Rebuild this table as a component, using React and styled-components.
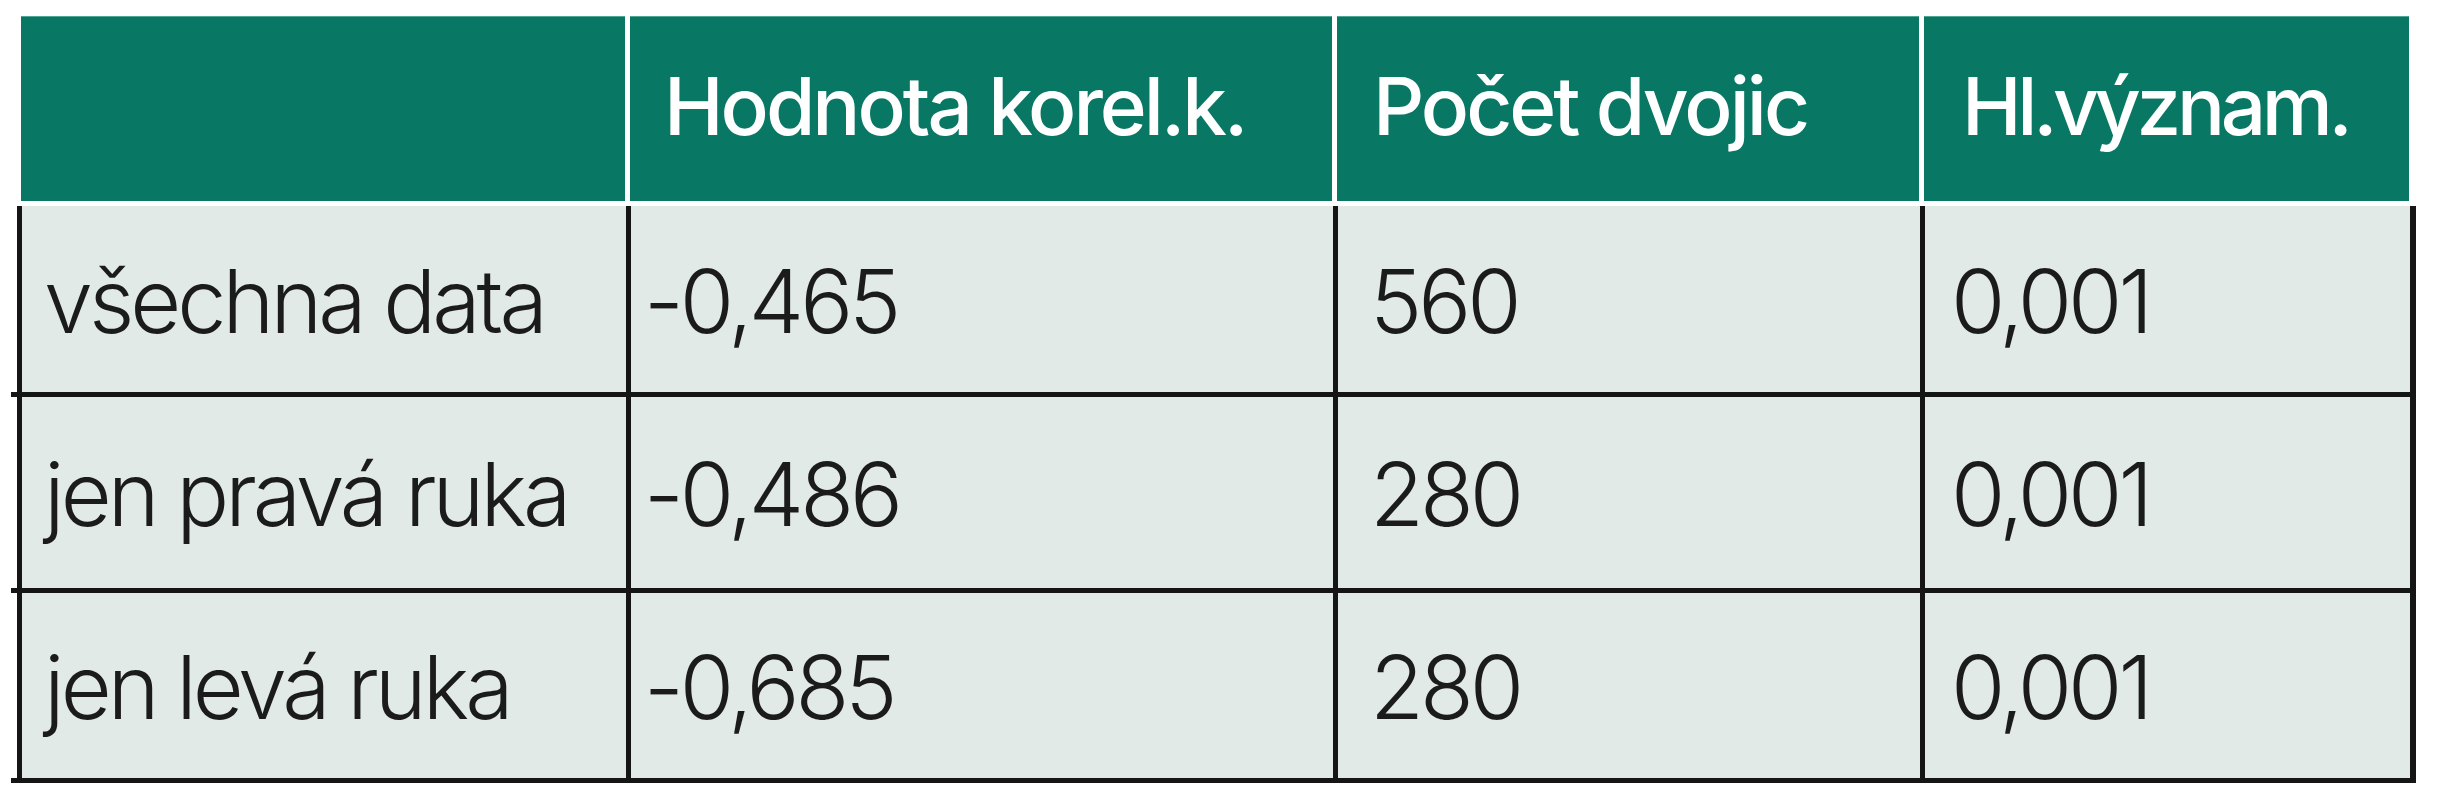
import React from "react";
import styled, { createGlobalStyle } from "styled-components";

const Global = createGlobalStyle`
  html, body { margin: 0; padding: 0; background: #ffffff; }
  body { font-family: Inter, "Noto Sans", sans-serif; }
`;

const COLS = "604px 702px 582px 485px";
const LINE = "#151515";

const Table = styled.div`
  width: 2399px;
  margin: 16px 0 0 17px;
  display: flex;
  flex-direction: column;
`;

const HeaderRow = styled.div`
  display: grid;
  grid-template-columns: ${COLS};
  column-gap: 5px;
  padding: 0 5px 0 4px;
  height: 185px;
  margin-bottom: 5px;
`;

const HeaderCell = styled.div`
  background: #087763;
  box-shadow: inset 0 1px 0 #4fa592;
  color: #ffffff;
  display: flex;
  align-items: center;
  padding-left: ${(p) => p.$pad}px;
  padding-bottom: 6px;
  font-family: Inter, "Noto Sans", sans-serif;
  font-weight: 480;
  font-size: 80px;
  letter-spacing: ${(p) => p.$ls}px;
  white-space: nowrap;
`;

const Body = styled.div`
  border-left: 5px solid ${LINE};
  border-right: 5px solid ${LINE};
  display: flex;
  flex-direction: column;
`;

const Row = styled.div`
  position: relative;
  display: grid;
  grid-template-columns: ${COLS};
  column-gap: 5px;
  height: ${(p) => p.$h}px;
  border-bottom: 5px solid ${LINE};
  background: ${LINE};

  &::before {
    content: "";
    position: absolute;
    left: -11px;
    bottom: -5px;
    width: 6px;
    height: 5px;
    background: ${LINE};
  }
`;

const Cell = styled.div`
  display: flex;
  align-items: center;
  padding-left: ${(p) => p.$pad}px;
  padding-top: 3px;
  background: #e1eae7;
  color: #1b1b1b;
  font-family: Inter, "Noto Sans", sans-serif;
  font-weight: 260;
  font-size: 88px;
  letter-spacing: -4px;
  white-space: nowrap;
`;

const headers = [
  { text: "", pad: 0, ls: -3 },
  { text: "Hodnota korel.k.", pad: 34, ls: -3 },
  { text: "Počet dvojic", pad: 36, ls: -3 },
  { text: "Hl.význam.", pad: 38, ls: -4.3 },
];

const bodyPads = [22, 13, 32, 26];

const rows = [
  { h: 186, cells: ["všechna data", "-0,465", "560", "0,001"] },
  { h: 191, cells: ["jen pravá ruka", "-0,486", "280", "0,001"] },
  { h: 185, cells: ["jen levá ruka", "-0,685", "280", "0,001"] },
];

export default function App() {
  return (
    <>
      <Global />
      <Table>
        <HeaderRow>
          {headers.map((h, i) => (
            <HeaderCell key={i} $pad={h.pad} $ls={h.ls}>
              {h.text}
            </HeaderCell>
          ))}
        </HeaderRow>
        <Body>
          {rows.map((r, i) => (
            <Row key={i} $h={r.h}>
              {r.cells.map((c, j) => (
                <Cell key={j} $pad={bodyPads[j]}>
                  {c}
                </Cell>
              ))}
            </Row>
          ))}
        </Body>
      </Table>
    </>
  );
}
